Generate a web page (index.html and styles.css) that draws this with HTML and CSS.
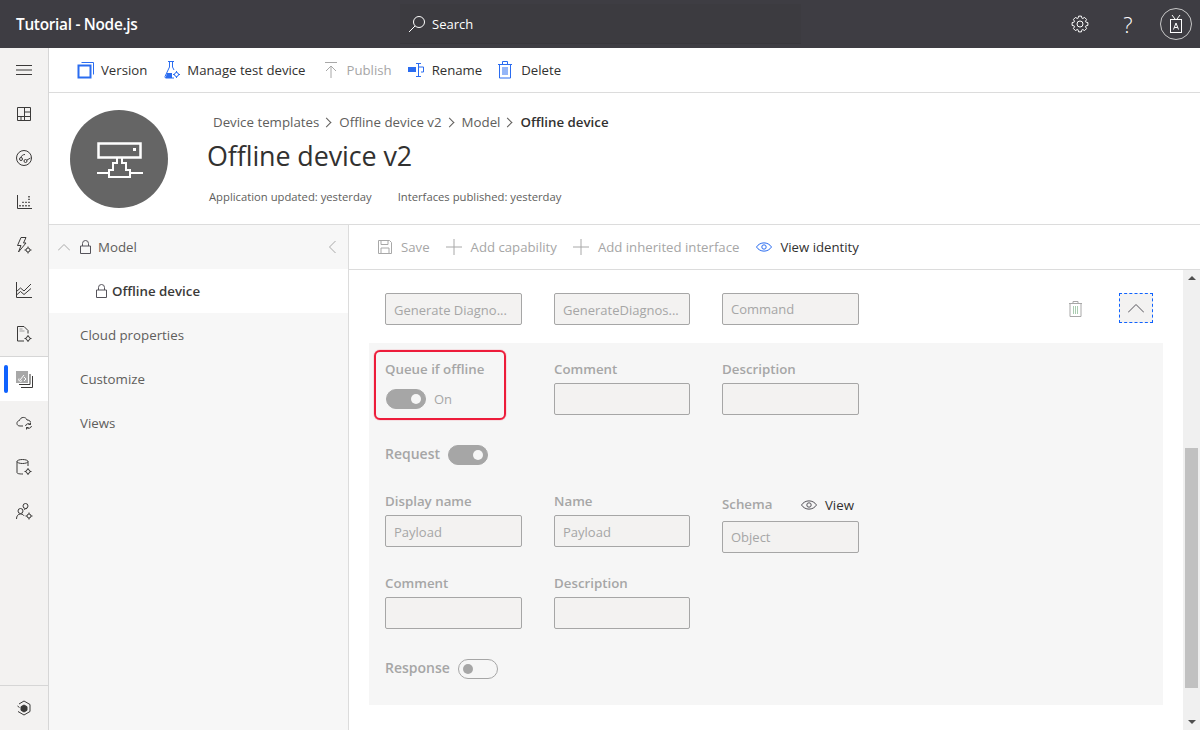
FILE: index.html
```html
<!DOCTYPE html>
<html lang="en">
<head>
  <meta charset="UTF-8">
  <title>Offline device v2</title>
  <link rel="stylesheet" href="styles.css">
</head>
<body>
  <header class="topbar">
    <div class="app-title">Tutorial - Node.js</div>
    <div class="search">
      <svg width="18" height="18" viewBox="0 0 18 18" class="line"><circle cx="11" cy="7" r="5.500"/><path d="M7 11 1 17"/></svg>
      <span>Search</span>
    </div>
    <div class="top-actions">
      <svg width="18" height="18" viewBox="-9 -9 18 18" class="line"><path d="M5.640-2.050 7.880-1.390V1.390L5.640 2.050 5.440 2.540 6.550 4.590 4.590 6.550 2.540 5.440 2.050 5.640 1.390 7.880H-1.390L-2.050 5.640-2.540 5.440-4.590 6.550-6.550 4.590-5.440 2.540-5.640 2.050-7.880 1.390V-1.390L-5.640-2.050-5.440-2.540-6.550-4.590-4.590-6.550-2.540-5.440-2.050-5.640-1.390-7.880H1.390L2.050-5.640 2.540-5.440 4.590-6.550 6.550-4.590 5.440-2.540z"/><circle r="3"/></svg>
      <span class="help">?</span>
      <span class="avatar">
        <svg width="14" height="20" viewBox="0 0 14 20" class="line"><path d="M3 1l3 4M11 1 8 5"/><rect x="1.500" y="5.500" width="11" height="13"/><path d="M4.500 15.500 7 9l2.500 6.500M5.300 13.500h3.400"/></svg>
      </span>
    </div>
  </header>

  <div class="main">
    <nav class="rail">
      <div class="rail-item">
        <svg width="16" height="10" viewBox="0 0 16 10" class="line dark"><path d="M0 .5h16M0 5h16M0 9.500h16"/></svg>
      </div>
      <div class="rail-item">
        <svg width="14" height="14" viewBox="0 0 14 14" class="line dark"><path d="M.5.5h13v13H.5zM7.500.5v13M7.500 5h6M7.500 9.500h6M.5 9.500h7M4 9.500v4"/></svg>
      </div>
      <div class="rail-item">
        <svg width="16" height="16" viewBox="0 0 16 16" class="line dark"><circle cx="8" cy="8" r="7.500"/><circle cx="5" cy="9" r="1.500"/><circle cx="9.500" cy="11" r="1.500"/><path d="M5 7.500C5.500 5.500 7 4.500 9 4.500M11 10l3.500-2"/></svg>
      </div>
      <div class="rail-item">
        <svg width="15" height="14" viewBox="0 0 15 14" class="line dark"><path d="M.5 0v13.500H15"/><path class="dots" d="M3 11.500V10M6 11.500V10M6 8V6.800M9 11.500V10M9 8V6.800M12 11.500V10M12 8V6.800M12 5V3.800M12 2.500V1"/></svg>
      </div>
      <div class="rail-item">
        <svg width="16" height="18" viewBox="0 0 16 18" class="line dark"><path d="M5 .5h5L7.500 6H10L2.500 15l2.500-6.500H1.500z"/><circle cx="12" cy="13" r="2"/><path d="M12 9.500v1.500M12 15v1.500M8.500 13H10M14 13h1.500"/></svg>
      </div>
      <div class="rail-item">
        <svg width="16" height="16" viewBox="0 0 16 16" class="line dark"><path d="M.5 0v15.500H16"/><path d="M.5 9.500l4-3.500 3.500 3 7-7M.5 13l4-3.500 3.500 3 7-6"/></svg>
      </div>
      <div class="rail-item rail-split">
        <svg width="16" height="17" viewBox="0 0 16 17" class="line dark"><path d="M8 .5H1.500v14.500H8"/><path d="M8 .5l4 4v3"/><path class="soft" d="M3.500 3h3M3.500 5h5"/><circle cx="12" cy="12.500" r="2"/><path d="M12 9v1.500M12 14.500V16M8.500 12.500H10M14 12.500h1.500"/></svg>
      </div>
      <div class="rail-item active">
        <svg width="17" height="17" viewBox="0 0 17 17" class="line dark"><rect class="fill" x="0" y="0" width="12" height="12"/><path d="M14 3v10.500H3M16.500 5v11.500H5"/><path class="line-white" d="M4 9l4-5M3 7.500a1.500 1.500 0 1 0 3 2M8 6l2 2-2 2"/></svg>
      </div>
      <div class="rail-item">
        <svg width="17" height="14" viewBox="0 0 17 14" class="line dark"><path d="M7 10H4C0 10 0 5 3.500 4.500 4.500.5 10 .5 11 4c1.500 0 3 .5 3.500 2"/><path d="M9.500 10a3 3 0 0 1 5-1.500M15.500 10a3 3 0 0 1-5 1.500M14.500 6.500v2h-2M10.500 13.500v-2h2"/></svg>
      </div>
      <div class="rail-item">
        <svg width="16" height="17" viewBox="0 0 16 17" class="line dark"><ellipse cx="6.500" cy="2.500" rx="5.500" ry="2"/><path d="M1 2.500v11c0 1 1.500 1.500 6 1.500M12 2.500V7"/><circle cx="12" cy="12.500" r="2"/><path d="M12 9v1.500M12 14.500V16M8.500 12.500H10M14 12.500h1.500"/></svg>
      </div>
      <div class="rail-item">
        <svg width="17" height="17" viewBox="0 0 17 17" class="line dark"><circle cx="9.500" cy="3" r="2.500"/><circle cx="4.500" cy="8" r="2.500"/><path d="M.5 16c0-3 1.500-5 4-5s3 1 3.500 2M8 7c.5-1 1.500-1.500 3-1.500"/><circle cx="13" cy="13" r="2"/><path d="M13 9.500V11M13 15v1.500M9.500 13H11M15 13h1.500"/></svg>
      </div>
      <div class="rail-bottom">
        <svg width="14" height="16" viewBox="0 0 14 16" class="line dark"><path d="M2 4 7 1l6 3.500v7L7 15l-6-3.500M.5 6l2 1.500"/><path class="hex" d="M7 5l3 1.700v3.600L7 12l-3-1.700V6.700z"/></svg>
      </div>
    </nav>

    <div class="page">
      <div class="commandbar">
        <span class="cmd cmd-version">
          <svg width="18" height="18" viewBox="0 0 18 18" class="line blue"><path d="M4.500 1.500h12v12"/><rect x="1.500" y="4.500" width="12" height="12" stroke-width="2"/></svg>
          Version
        </span>
        <span class="cmd">
          <svg width="16" height="18" viewBox="0 0 16 18" class="line blue"><path d="M4 .5h6M5.500 1v5L1 15.500q-.3 1.500 1 1.500h8"/><path d="M8.500 1v5l1.500 3"/><path class="fill-blue" d="M3 12h5v5H1.500z"/><circle cx="12.500" cy="13.500" r="2"/><path d="M12.500 10v1.500M12.500 15.500V17M9 13.500h1.500M14.500 13.500H16"/></svg>
          Manage test device
        </span>
        <span class="cmd off cmd-publish">
          <svg width="12" height="16" viewBox="0 0 12 16" class="line grey"><path d="M0 .5h12M6 16V4M1 9l5-5 5 5"/></svg>
          Publish
        </span>
        <span class="cmd cmd-rename">
          <svg width="18" height="14" viewBox="0 0 18 14" class="line blue"><path class="fill-blue" d="M1 4h8v5H1z"/><path d="M11 4h5.500v5H14M9 .5h5M9 13.500h5M11.500 1v12"/></svg>
          Rename
        </span>
        <span class="cmd cmd-delete">
          <svg width="14" height="18" viewBox="0 0 14 18" class="line blue"><path d="M0 3.500h14M4.500 3V.5h5V3M1.500 3.500v13.500h11V3.500M5 6v8M7 6v8M9 6v8"/></svg>
          Delete
        </span>
      </div>

      <section class="template-head">
        <div class="device-circle">
          <svg width="46" height="36" viewBox="0 0 46 36" class="line white"><path stroke-width="2.500" d="M1.500 1.500h42v14h-42z"/><path stroke-width="2" d="M20 16v5h-4v7h-4v7h21v-7h-4v-7h-4v-5M0 31h12M33 31h13"/><path stroke-width="3" d="M37.500 6v3"/></svg>
        </div>
        <div class="head-text">
          <div class="crumbs">
            <span>Device templates</span><span class="crumb-sep"></span>
            <span>Offline device v2</span><span class="crumb-sep"></span>
            <span>Model</span><span class="crumb-sep"></span>
            <strong>Offline device</strong>
          </div>
          <h1>Offline device v2</h1>
          <div class="meta">
            <span>Application updated: yesterday</span>
            <span>Interfaces published: yesterday</span>
          </div>
        </div>
      </section>

      <div class="workspace">
        <aside class="sidenav">
          <div class="nav-row model-row">
            <svg width="12" height="7" viewBox="0 0 12 7" class="line grey"><path d="M0 6.500 6 .5l6 6"/></svg>
            <svg width="11" height="14" viewBox="0 0 11 14" class="line slate"><path d="M.5 6h10v7.500H.5zM2.500 6V3.500a3 3 0 0 1 6 0V6"/></svg>
            <span class="model-name">Model</span>
            <svg class="line grey collapse" width="7" height="12" viewBox="0 0 7 12"><path d="M6.500 0 .5 6l6 6"/></svg>
          </div>
          <div class="nav-row current">
            <svg width="11" height="14" viewBox="0 0 11 14" class="line slate"><path d="M.5 6h10v7.500H.5zM2.500 6V3.500a3 3 0 0 1 6 0V6"/></svg>
            <span>Offline device</span>
          </div>
          <div class="nav-row">Cloud properties</div>
          <div class="nav-row">Customize</div>
          <div class="nav-row">Views</div>
        </aside>

        <div class="editor">
          <div class="toolbar">
            <span class="tool off tool-save">
              <svg width="14" height="14" viewBox="0 0 14 14" class="line grey"><path d="M.5.5h11l2 2v11H.5zM3 .5v4h7v-4M3 13.500V8h8v5.500"/></svg>
              Save
            </span>
            <span class="tool off">
              <svg width="16" height="16" viewBox="0 0 16 16" class="line grey"><path d="M8 0v16M0 8h16"/></svg>
              Add capability
            </span>
            <span class="tool off">
              <svg width="16" height="16" viewBox="0 0 16 16" class="line grey"><path d="M8 0v16M0 8h16"/></svg>
              Add inherited interface
            </span>
            <span class="tool tool-view">
              <svg width="16" height="10" viewBox="0 0 16 10" class="line blue"><path d="M.5 5C4 -.5 12 -.5 15.500 5 12 10.500 4 10.500 .5 5z"/><circle cx="8" cy="5" r="2.200"/></svg>
              View identity
            </span>
          </div>

          <div class="scroll-area">
            <div class="content">
              <div class="command-row">
                <div class="form-grid">
                  <div class="field-box low">Generate Diagno...</div>
                  <div class="field-box low">GenerateDiagnos...</div>
                  <div class="field-box">Command</div>
                </div>
                <svg class="line grey row-trash" width="13" height="16" viewBox="0 0 13 16"><path d="M0 2.500h13M4 2V.5h5V2M1 2.500v13h11v-13"/><path class="green" d="M4.500 5v8M6.500 5v8M8.500 5v8"/></svg>
                <div class="collapse-btn">
                  <svg width="16" height="9" viewBox="0 0 16 9" class="line slate"><path d="M0 8.500 8 .5l8 8"/></svg>
                </div>
              </div>

              <div class="panel">
                <div class="form-grid first-grid">
                  <div class="field queue">
                    <label>Queue if offline</label>
                    <div class="switch-line">
                      <span class="switch on"></span>
                      <span class="switch-text">On</span>
                    </div>
                    <div class="highlight"></div>
                  </div>
                  <div class="field">
                    <label>Comment</label>
                    <div class="field-box"></div>
                  </div>
                  <div class="field">
                    <label>Description</label>
                    <div class="field-box"></div>
                  </div>
                </div>

                <div class="inline-title request">
                  <label>Request</label>
                  <span class="switch on"></span>
                </div>

                <div class="form-grid payload-grid">
                  <div class="field">
                    <label>Display name</label>
                    <div class="field-box low">Payload</div>
                  </div>
                  <div class="field">
                    <label>Name</label>
                    <div class="field-box low">Payload</div>
                  </div>
                  <div class="field schema">
                    <div class="schema-head">
                      <label>Schema</label>
                      <span class="view-link">
                        <svg width="16" height="10" viewBox="0 0 16 10" class="line slate"><path d="M.5 5C4 -.5 12 -.5 15.500 5 12 10.500 4 10.500 .5 5z"/><circle cx="8" cy="5" r="2.200"/></svg>
                        View
                      </span>
                    </div>
                    <div class="field-box">Object</div>
                  </div>
                </div>

                <div class="form-grid comment-grid">
                  <div class="field">
                    <label>Comment</label>
                    <div class="field-box"></div>
                  </div>
                  <div class="field">
                    <label>Description</label>
                    <div class="field-box"></div>
                  </div>
                </div>

                <div class="inline-title response">
                  <label>Response</label>
                  <span class="switch"></span>
                </div>
              </div>
            </div>

            <div class="scrollbar">
              <span class="arrow up"></span>
              <div class="track"><div class="thumb"></div></div>
              <span class="arrow down"></span>
            </div>
          </div>
        </div>
      </div>
    </div>
  </div>
</body>
</html>
```

FILE: styles.css
```css
* {
  box-sizing: border-box;
}
html, body {
  height: 100%;
}
body {
  margin: 0;
  height: 730px;
  overflow: hidden;
  font-family: "Open Sans", "Noto Sans", sans-serif;
  font-size: 13.3px;
  color: #323130;
  background: white;
  display: flex;
  flex-direction: column;
}

/* svg line icons */
.line {
  fill: none;
  stroke: currentColor;
  stroke-width: 1;
  flex: none;
}
.dark { color: #3b3a39; }
.blue { color: #2a6cf0; }
.grey { color: #a8a8a8; }
.slate { color: #55535a; }
.white { color: white; }
.fill { fill: #a8a8a8; stroke: none; }
.line-white { stroke: white; }
.fill-blue { fill: #2a6cf0; stroke: none; }
.dots { stroke-width: 1.5; }
.soft { color: #9a9a9a; }
.hex { fill: #3b3a39; }
.green { color: #a9cdb0; }

/* top bar */
.topbar {
  height: 48px;
  flex: none;
  background: #3e3d43;
  color: white;
  display: flex;
  align-items: center;
}
.app-title {
  width: 400px;
  padding-left: 16px;
  font-size: 15.4px;
  font-weight: 600;
  letter-spacing: -0.3px;
}
.search {
  width: 401px;
  height: 40px;
  background: #3c3b40;
  border-bottom: 1px solid #38373c;
  display: flex;
  align-items: center;
  gap: 6px;
  padding-left: 8px;
  margin: 8px 0;
  font-size: 13px;
}
.top-actions {
  flex: 1;
  display: flex;
  align-items: center;
  justify-content: flex-end;
  padding-right: 8px;
}
.help {
  font-size: 22px;
  width: 20px;
  margin: 0 22px 0 29px;
  text-align: center;
  font-weight: 300;
}
.avatar {
  width: 32px;
  height: 32px;
  border: 1px solid #c8c8c8;
  border-radius: 50%;
  display: flex;
  align-items: center;
  justify-content: center;
}

.main {
  flex: 1;
  display: flex;
  min-height: 0;
}

/* left icon rail */
.rail {
  width: 49px;
  flex: none;
  background: #f3f2f1;
  border-right: 1px solid #d6d6d6;
  display: flex;
  flex-direction: column;
}
.rail-item {
  height: 44px;
  display: flex;
  align-items: center;
  justify-content: center;
  position: relative;
  flex: none;
}
.rail-split {
  height: 45px;
  border-bottom: 1px solid #d6d6d6;
}
.rail-item.active {
  background: white;
}
.rail-item.active::before {
  content: "";
  position: absolute;
  left: 4px;
  top: 8px;
  bottom: 8px;
  width: 4px;
  border-radius: 2px;
  background: #0f62fe;
}
.rail-bottom {
  margin-top: auto;
  height: 45px;
  border-top: 1px solid #d6d6d6;
  display: flex;
  align-items: center;
  justify-content: center;
}

.page {
  flex: 1;
  min-width: 0;
  display: flex;
  flex-direction: column;
}

/* command bar */
.commandbar {
  height: 45px;
  flex: none;
  border-bottom: 1px solid #dcdcdc;
  padding-left: 28px;
  display: flex;
  align-items: center;
  gap: 17px;
  font-size: 13.2px;
}
.cmd {
  display: flex;
  align-items: center;
  gap: 7px;
}
.cmd-version {
  gap: 6px;
}
.cmd-publish {
  margin-left: 2px;
  gap: 10px;
}
.cmd-rename {
  margin-left: -2px;
}
.cmd-delete {
  margin-left: -1px;
  gap: 9px;
}
.off {
  color: #a6a6a6;
}

/* device header */
.template-head {
  height: 132px;
  flex: none;
  border-bottom: 1px solid #dcdcdc;
  display: flex;
  padding: 17px 0 0 21px;
}
.device-circle {
  width: 98px;
  height: 98px;
  border-radius: 50%;
  background: #656565;
  display: flex;
  align-items: center;
  justify-content: center;
  padding: 1px 0 0 1px;
}
.head-text {
  padding-left: 39px;
}
.crumbs {
  display: flex;
  align-items: center;
  height: 24px;
  padding-left: 6px;
  font-size: 13.3px;
  color: #605e5c;
}
.crumbs strong {
  font-weight: 600;
  color: #323130;
}
.crumb-sep {
  width: 7px;
  height: 7px;
  border-top: 1px solid #605e5c;
  border-right: 1px solid #605e5c;
  transform: rotate(45deg);
  margin: 0 9px 0 4px;
}
h1 {
  margin: 5px 0 0;
  font-size: 26.9px;
  font-weight: 400;
  line-height: 34px;
  letter-spacing: -0.1px;
}
.meta {
  display: flex;
  gap: 26px;
  margin-top: 16px;
  padding-left: 2px;
  font-size: 11.25px;
  color: #605e5c;
}

.workspace {
  flex: 1;
  display: flex;
  min-height: 0;
}

/* side nav */
.sidenav {
  width: 300px;
  flex: none;
  background: #f7f7f7;
  border-right: 1px solid #dcdcdc;
  color: #605e5c;
}
.nav-row {
  height: 44px;
  display: flex;
  align-items: center;
  padding-left: 31px;
}
.model-row {
  padding-left: 9px;
  gap: 10px;
}
.model-name {
  margin-left: -3px;
}
.collapse {
  margin-left: auto;
  margin-right: 12px;
}
.current {
  background: white;
  padding-left: 47px;
  gap: 5px;
  font-weight: 600;
  color: #3b3a39;
}

/* editor */
.editor {
  flex: 1;
  min-width: 0;
  display: flex;
  flex-direction: column;
}
.toolbar {
  height: 45px;
  flex: none;
  border-bottom: 1px solid #dcdcdc;
  padding-left: 29px;
  display: flex;
  align-items: center;
  gap: 16px;
  font-size: 13.2px;
}
.tool {
  display: flex;
  align-items: center;
  gap: 9px;
}
.tool-view {
  gap: 8px;
  margin-left: 1px;
}
.scroll-area {
  flex: 1;
  min-height: 0;
  display: flex;
}
.content {
  flex: 1;
  min-width: 0;
  padding: 23px 20px 0;
}
.command-row {
  display: flex;
  align-items: flex-start;
  padding-left: 16px;
  height: 50px;
}
.form-grid {
  display: grid;
  grid-template-columns: 137px 136px 137px;
  column-gap: 32px;
  align-items: start;
}
.field-box {
  height: 32px;
  background: #f3f2f1;
  border: 1px solid #a6a6a6;
  border-radius: 2px;
  color: #a6a6a6;
  padding: 0 8px;
  display: flex;
  align-items: center;
  font-size: 13px;
}
.low {
  padding-top: 2px;
}
.row-trash {
  margin: 8px 0 0 210px;
}
.collapse-btn {
  width: 34px;
  height: 30px;
  margin-left: 37px;
  background: #f3f2f1;
  border: 1px dashed #0f62fe;
  display: flex;
  align-items: center;
  justify-content: center;
}
.panel {
  background: #f6f6f6;
  height: 362px;
  padding: 16px 16px 0;
}
.field {
  position: relative;
}
label {
  display: block;
  font-weight: 600;
  color: #a6a6a6;
  line-height: 20px;
}
.field label {
  margin-bottom: 4px;
}
.switch-line {
  display: flex;
  align-items: center;
  gap: 8px;
  margin: 10px 0 0 1px;
}
.switch-text {
  color: #a6a6a6;
  font-size: 13px;
}
.switch {
  width: 40px;
  height: 20px;
  border-radius: 10px;
  border: 1px solid #a6a6a6;
  position: relative;
  display: block;
  flex: none;
}
.switch::after {
  content: "";
  position: absolute;
  left: 4px;
  top: 4px;
  width: 10px;
  height: 10px;
  border-radius: 50%;
  background: #a6a6a6;
}
.switch.on {
  background: #a6a6a6;
}
.switch.on::after {
  left: auto;
  right: 4px;
  background: #f6f6f6;
}
.highlight {
  position: absolute;
  left: -11px;
  top: -9px;
  width: 132px;
  height: 70px;
  border: 2px solid #ed1c3a;
  border-radius: 6px;
  box-shadow: 0 0 1px #ed1c3a;
}
.inline-title {
  display: flex;
  align-items: center;
  gap: 8px;
}
.inline-title label {
  font-size: 14px;
  position: relative;
  top: -1px;
}
.request {
  margin-top: 30px;
}
.payload-grid {
  margin-top: 26px;
}
.schema-head {
  display: flex;
  align-items: center;
  justify-content: space-between;
  padding-right: 5px;
  margin-top: 3px;
  margin-bottom: 7px;
  height: 20px;
}
.schema-head label {
  margin: 0;
}
.view-link {
  display: flex;
  align-items: center;
  gap: 8px;
  padding-top: 1px;
}
.comment-grid {
  margin-top: 20px;
}
.response {
  margin-top: 30px;
}

/* scrollbar */
.scrollbar {
  width: 17px;
  flex: none;
  background: #f0f0f0;
  display: flex;
  flex-direction: column;
  align-items: center;
}
.arrow {
  width: 0;
  height: 0;
  flex: none;
  border-left: 4px solid transparent;
  border-right: 4px solid transparent;
}
.arrow.up {
  margin-top: 6px;
  border-bottom: 4px solid #505050;
}
.arrow.down {
  margin-bottom: 6px;
  border-top: 4px solid #505050;
}
.track {
  flex: 1;
  width: 13px;
  padding-top: 168px;
}
.thumb {
  height: 240px;
  background: #c1c1c1;
}
```
